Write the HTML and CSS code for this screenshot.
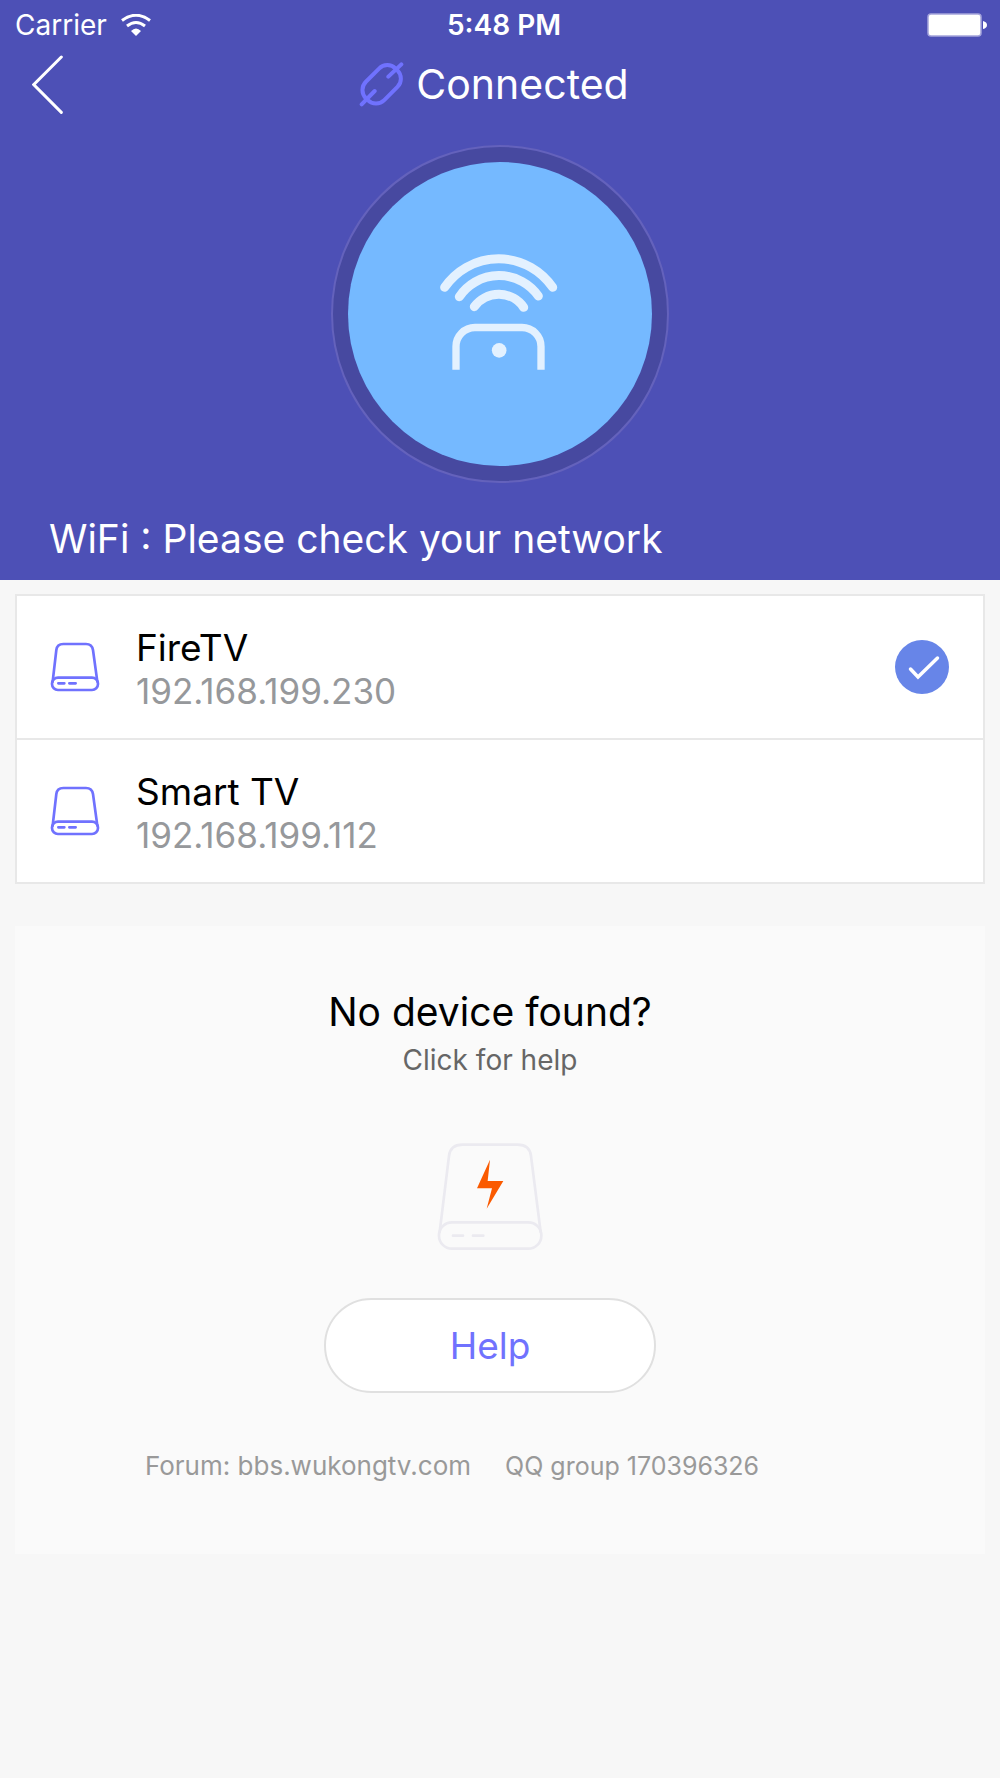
FILE: index.html
```html
<!DOCTYPE html>
<html lang="en">
<head>
<meta charset="utf-8">
<meta name="viewport" content="width=device-width, initial-scale=1">
<title>Connected</title>
<link rel="stylesheet" href="styles.css">
</head>
<body>
<svg class="defs" aria-hidden="true">
  <symbol id="device" viewBox="150 426 150 150">
    <path d="M158 545L169 450Q171 432 190 432H258Q276 432 279 450L292 545"/>
    <rect x="156" y="533" width="138" height="37" rx="18"/>
    <path d="M175 550H193M208 550H227"/>
  </symbol>
</svg>
<header class="hero">
  <div class="status">
    <div class="carrier">
      <span>Carrier</span>
      <svg class="wifi" viewBox="0 0 30 22" fill="none" stroke="#fff" stroke-width="3" aria-hidden="true">
        <path d="M1 6.500Q15 -4 29 6.500M6 12Q15 5 24 12"/>
        <path d="M10 17Q15 12 20 17L15 22Z" fill="#fff" stroke="none"/>
      </svg>
    </div>
    <time class="clock">5:48 PM</time>
    <svg class="battery" viewBox="0 0 60 24" aria-hidden="true">
      <rect x="1" y="1" width="53" height="22" rx="3" fill="#fff" stroke="#a5a5dc" stroke-width="1.500"/>
      <path d="M56 8Q60 9 60 12T56 16Z" fill="#fff"/>
    </svg>
  </div>
  <nav class="nav">
    <button class="back" aria-label="Back">
      <svg viewBox="96 165 93 177" fill="none" stroke="#fff" stroke-width="9" stroke-linecap="round"><path d="M184 171L101 254L184 337"/></svg>
    </button>
    <h1 class="title">
      <svg class="link" viewBox="54 183 135 141" fill="none" stroke="#7072fe" stroke-width="12" stroke-linecap="round" aria-hidden="true">
        <rect x="59" y="214" width="126" height="78" rx="35" transform="rotate(-45 122 253)"/>
        <path d="M62 313L101 273M142 230L181 193"/>
      </svg>
      <span>Connected</span>
    </h1>
  </nav>
  <div class="ring">
    <div class="disc">
      <svg class="remote" viewBox="360 372 360 360" fill="none" stroke="#e3f1ff" aria-hidden="true">
        <g stroke-width="27" stroke-linecap="round">
          <path d="M374 472A196 196 0 0 1 698 472M418 500A144 144 0 0 1 655 498M463 530A91 91 0 0 1 611 532"/>
        </g>
        <path d="M408 719V650A57 57 0 0 1 465 592.500H606A57 57 0 0 1 663 650V719" stroke-width="22"/>
        <circle cx="537.500" cy="661" r="22" fill="#e3f1ff" stroke="none"/>
      </svg>
    </div>
  </div>
  <p class="network">WiFi : Please check your network</p>
</header>
<main>
  <ul class="devices">
    <li>
      <button class="device" aria-pressed="true">
        <svg class="device-icon"><use href="#device"/></svg>
        <span class="device-text"><span class="name">FireTV</span><span class="address">192.168.199.230</span></span>
        <svg class="check" viewBox="0 0 54 54" aria-hidden="true"><circle cx="27" cy="27" r="27" fill="#6785e8"/><path d="M15.500 29L23 37L42.500 18" fill="none" stroke="#fff" stroke-width="3.500" stroke-linecap="round"/></svg>
      </button>
    </li>
    <li>
      <button class="device" aria-pressed="false">
        <svg class="device-icon"><use href="#device"/></svg>
        <span class="device-text"><span class="name">Smart TV</span><span class="address">192.168.199.112</span></span>
      </button>
    </li>
  </ul>
  <section class="help">
    <h2 class="help-title">No device found?</h2>
    <p class="help-hint">Click for help</p>
    <svg class="help-art" viewBox="380 518 318 321" fill="none" stroke="#ebeaf0" stroke-width="8" stroke-linecap="round" aria-hidden="true">
      <path d="M388 785L416 557Q420 523 456 523H622Q658 523 662 557L691 785"/>
      <rect x="386" y="756" width="307" height="79" rx="39"/>
      <path d="M428 796H458M488 796H519"/>
      <path d="M539 568L500 654H545L529 715L579 632H532Z" fill="#fa5a00" stroke="none"/>
    </svg>
    <button class="help-button">Help</button>
    <div class="contact">
      <span>Forum: <a href="http://bbs.wukongtv.com">bbs.wukongtv.com</a></span>
      <span class="group">QQ group 170396326</span>
    </div>
  </section>
</main>
</body>
</html>
```
FILE: styles.css
```css
* { box-sizing: border-box; }
body {
  margin: 0;
  min-height: 100vh;
  background: #f7f7f7;
  font-family: Inter, "Liberation Sans", sans-serif;
  color: #000;
}
h1, h2, p, ul { margin: 0; padding: 0; font-weight: 400; }
ul { list-style: none; }
button { font: inherit; color: inherit; border: 0; background: none; padding: 0; }
svg { display: block; flex: none; }
.defs { display: none; }

.hero {
  display: flex;
  flex-direction: column;
  padding-bottom: 16px;
  background: #4d50b6;
  color: #fff;
}
.status {
  display: grid;
  grid-template-columns: 1fr auto 1fr;
  align-items: center;
  height: 50px;
  padding: 0 13px 0 15px;
  font-size: 28px;
}
.carrier { display: flex; align-items: center; gap: 14px; }
.wifi { width: 30px; height: 22px; }
.clock { padding-left: 6px; font-weight: 600; font-size: 28px; }
.battery { width: 60px; height: 24px; justify-self: end; }
.nav {
  display: grid;
  grid-template-columns: 1fr auto 1fr;
  align-items: center;
  height: 68px;
  padding: 0 44px 0 32px;
}
.back svg { width: 31px; height: 59px; }
.title { display: flex; align-items: center; gap: 12px; font-size: 41px; line-height: 50px; }
.link { width: 45px; height: 47px; }
.ring {
  display: grid;
  place-items: center;
  align-self: center;
  width: 338px;
  height: 338px;
  margin-top: 27px;
  border: 2px solid #6462bc;
  border-radius: 50%;
  background: #4749a0;
}
.disc {
  display: grid;
  place-items: center;
  width: 304px;
  height: 304px;
  border-radius: 50%;
  background: #75b9ff;
}
.remote { width: 120px; height: 120px; overflow: visible; }
.network { margin: 31px 49px 0; font-size: 39px; line-height: 50px; }

.devices { margin: 14px 15px 0; border: 2px solid #e8e8e8; background: #fff; }
.devices li + li { border-top: 2px solid #e8e8e8; }
.device {
  display: flex;
  align-items: center;
  width: 100%;
  height: 142px;
  padding: 0 34px 0 33px;
  text-align: left;
}
.device-icon { width: 50px; height: 50px; fill: none; stroke: #7072fe; stroke-width: 8px; stroke-linecap: round; }
.device-text { display: flex; flex-direction: column; flex: 1; margin-left: 36px; padding-top: 4px; }
.name { font-size: 37px; line-height: 44px; }
.address { font-size: 35px; line-height: 42px; color: #96989b; }
.check { width: 54px; height: 54px; }

.help {
  display: flex;
  flex-direction: column;
  align-items: center;
  margin: 42px 15px 0;
  padding: 62px 20px 72px 0;
  background: #fafafa;
}
.help-title { font-size: 39px; line-height: 48px; }
.help-hint { margin-top: 8px; font-size: 28px; line-height: 32px; color: #666; }
.help-art { width: 106px; height: 107px; margin-top: 67px; }
.help-button {
  width: 332px;
  height: 95px;
  margin-top: 48px;
  border: 2px solid #e0e0e0;
  border-radius: 48px;
  background: #fff;
  color: #7072fe;
  font-size: 37px;
}
.contact {
  display: flex;
  align-items: baseline;
  gap: 34px;
  margin: 57px 76px 0 0;
  font-size: 26px;
  line-height: 32px;
  color: #999;
}
.contact a { color: inherit; text-decoration: none; }
.group { font-size: 25px; }
```
